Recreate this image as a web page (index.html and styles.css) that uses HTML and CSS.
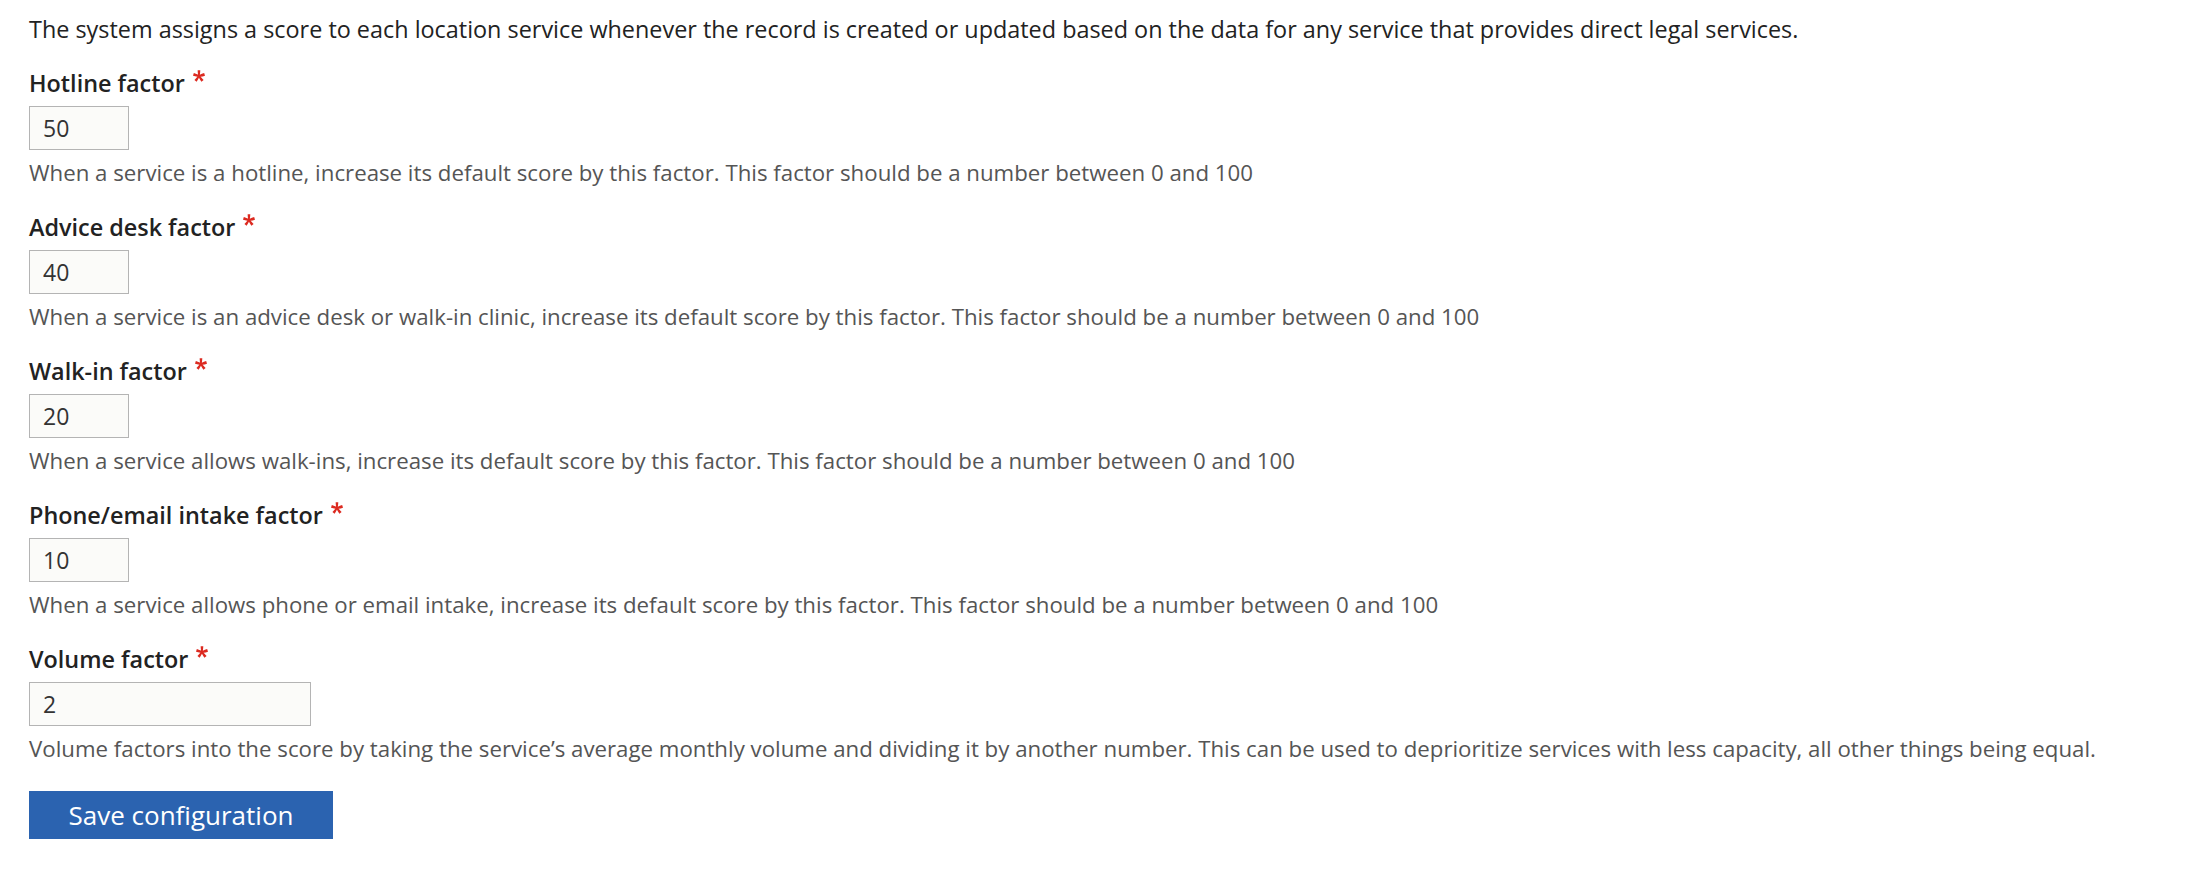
FILE: index.html
```html
<!DOCTYPE html>
<html lang="en">

<head>
    <meta charset="UTF-8">
    <meta name="viewport" content="width=device-width, initial-scale=1.0">
    <title>Location service scoring</title>
    <link rel="stylesheet" href="styles.css">
</head>

<body>
    <form class="config-form">
        <p class="intro">The system assigns a score to each location service whenever the record is created or updated based on the data for any service that provides direct legal services.</p>

        <div class="form-item">
            <label for="hotline">Hotline factor <span class="required"><svg viewBox="0 0 16 16"><path d="M0,7.562l1.114-3.438c2.565,0.906,4.43,1.688,5.59,2.35C6.398,3.553,6.237,1.544,6.22,0.447h3.511c-0.05,1.597-0.234,3.6-0.558,6.003c1.664-0.838,3.566-1.613,5.714-2.325L16,7.562c-2.05,0.678-4.06,1.131-6.028,1.356c0.984,0.856,2.372,2.381,4.166,4.575l-2.906,2.059c-0.935-1.274-2.041-3.009-3.316-5.206c-1.194,2.275-2.244,4.013-3.147,5.206l-2.856-2.059c1.872-2.307,3.211-3.832,4.017-4.575C3.849,8.516,1.872,8.062,0,7.562"/></svg></span></label>
            <input class="form-number" type="text" id="hotline" value="50">
            <div class="description">When a service is a hotline, increase its default score by this factor. This factor should be a number between 0 and 100</div>
        </div>

        <div class="form-item">
            <label for="advice">Advice desk factor <span class="required"><svg viewBox="0 0 16 16"><path d="M0,7.562l1.114-3.438c2.565,0.906,4.43,1.688,5.59,2.35C6.398,3.553,6.237,1.544,6.22,0.447h3.511c-0.05,1.597-0.234,3.6-0.558,6.003c1.664-0.838,3.566-1.613,5.714-2.325L16,7.562c-2.05,0.678-4.06,1.131-6.028,1.356c0.984,0.856,2.372,2.381,4.166,4.575l-2.906,2.059c-0.935-1.274-2.041-3.009-3.316-5.206c-1.194,2.275-2.244,4.013-3.147,5.206l-2.856-2.059c1.872-2.307,3.211-3.832,4.017-4.575C3.849,8.516,1.872,8.062,0,7.562"/></svg></span></label>
            <input class="form-number" type="text" id="advice" value="40">
            <div class="description">When a service is an advice desk or walk-in clinic, increase its default score by this factor. This factor should be a number between 0 and 100</div>
        </div>

        <div class="form-item">
            <label for="walkin">Walk-in factor <span class="required"><svg viewBox="0 0 16 16"><path d="M0,7.562l1.114-3.438c2.565,0.906,4.43,1.688,5.59,2.35C6.398,3.553,6.237,1.544,6.22,0.447h3.511c-0.05,1.597-0.234,3.6-0.558,6.003c1.664-0.838,3.566-1.613,5.714-2.325L16,7.562c-2.05,0.678-4.06,1.131-6.028,1.356c0.984,0.856,2.372,2.381,4.166,4.575l-2.906,2.059c-0.935-1.274-2.041-3.009-3.316-5.206c-1.194,2.275-2.244,4.013-3.147,5.206l-2.856-2.059c1.872-2.307,3.211-3.832,4.017-4.575C3.849,8.516,1.872,8.062,0,7.562"/></svg></span></label>
            <input class="form-number" type="text" id="walkin" value="20">
            <div class="description">When a service allows walk-ins, increase its default score by this factor. This factor should be a number between 0 and 100</div>
        </div>

        <div class="form-item">
            <label for="intake">Phone/email intake factor <span class="required"><svg viewBox="0 0 16 16"><path d="M0,7.562l1.114-3.438c2.565,0.906,4.43,1.688,5.59,2.35C6.398,3.553,6.237,1.544,6.22,0.447h3.511c-0.05,1.597-0.234,3.6-0.558,6.003c1.664-0.838,3.566-1.613,5.714-2.325L16,7.562c-2.05,0.678-4.06,1.131-6.028,1.356c0.984,0.856,2.372,2.381,4.166,4.575l-2.906,2.059c-0.935-1.274-2.041-3.009-3.316-5.206c-1.194,2.275-2.244,4.013-3.147,5.206l-2.856-2.059c1.872-2.307,3.211-3.832,4.017-4.575C3.849,8.516,1.872,8.062,0,7.562"/></svg></span></label>
            <input class="form-number" type="text" id="intake" value="10">
            <div class="description">When a service allows phone or email intake, increase its default score by this factor. This factor should be a number between 0 and 100</div>
        </div>

        <div class="form-item">
            <label for="volume">Volume factor <span class="required"><svg viewBox="0 0 16 16"><path d="M0,7.562l1.114-3.438c2.565,0.906,4.43,1.688,5.59,2.35C6.398,3.553,6.237,1.544,6.22,0.447h3.511c-0.05,1.597-0.234,3.6-0.558,6.003c1.664-0.838,3.566-1.613,5.714-2.325L16,7.562c-2.05,0.678-4.06,1.131-6.028,1.356c0.984,0.856,2.372,2.381,4.166,4.575l-2.906,2.059c-0.935-1.274-2.041-3.009-3.316-5.206c-1.194,2.275-2.244,4.013-3.147,5.206l-2.856-2.059c1.872-2.307,3.211-3.832,4.017-4.575C3.849,8.516,1.872,8.062,0,7.562"/></svg></span></label>
            <input class="form-number wide" type="text" id="volume" value="2">
            <div class="description">Volume factors into the score by taking the service’s average monthly volume and dividing it by another number. This can be used to deprioritize services with less capacity, all other things being equal.</div>
        </div>

        <div class="form-actions">
            <button type="button" class="button-primary">Save configuration</button>
        </div>
    </form>
</body>

</html>
```

FILE: styles.css
```css
body {
    margin: 0;
    padding: 14px 29px;
    background: #fff;
    color: #222;
    font-family: "Open Sans", "Liberation Sans", sans-serif;
    font-size: 23.4px;
    line-height: 30px;
}

.intro {
    margin: 0 0 24px;
}

.form-item {
    display: flex;
    flex-direction: column;
    align-items: flex-start;
    margin-bottom: 24px;
}

.form-item label {
    display: block;
    font-size: 23.4px;
    font-weight: 600;
    line-height: 30px;
    margin-bottom: 8px;
}

.required svg {
    display: inline-block;
    width: 12px;
    height: 12px;
    margin-left: 2px;
    vertical-align: 10px;
    fill: #dc2a20;
}

.form-number {
    box-sizing: border-box;
    width: 100px;
    height: 44px;
    margin: 0 0 8px;
    padding: 0 13px;
    border: 1px solid #b4b4b4;
    border-radius: 0;
    background: #fbfbf9;
    color: #333;
    font-family: inherit;
    font-size: 23px;
}

.form-number.wide {
    width: 282px;
}

.description {
    color: #555;
    font-size: 22.25px;
}

.form-actions {
    padding-top: 3px;
}

.button-primary {
    width: 304px;
    height: 48px;
    border: 0;
    border-radius: 0;
    background: #2b63b0;
    color: #fff;
    font-family: inherit;
    font-size: 26px;
    font-weight: 500;
    cursor: pointer;
}
```
